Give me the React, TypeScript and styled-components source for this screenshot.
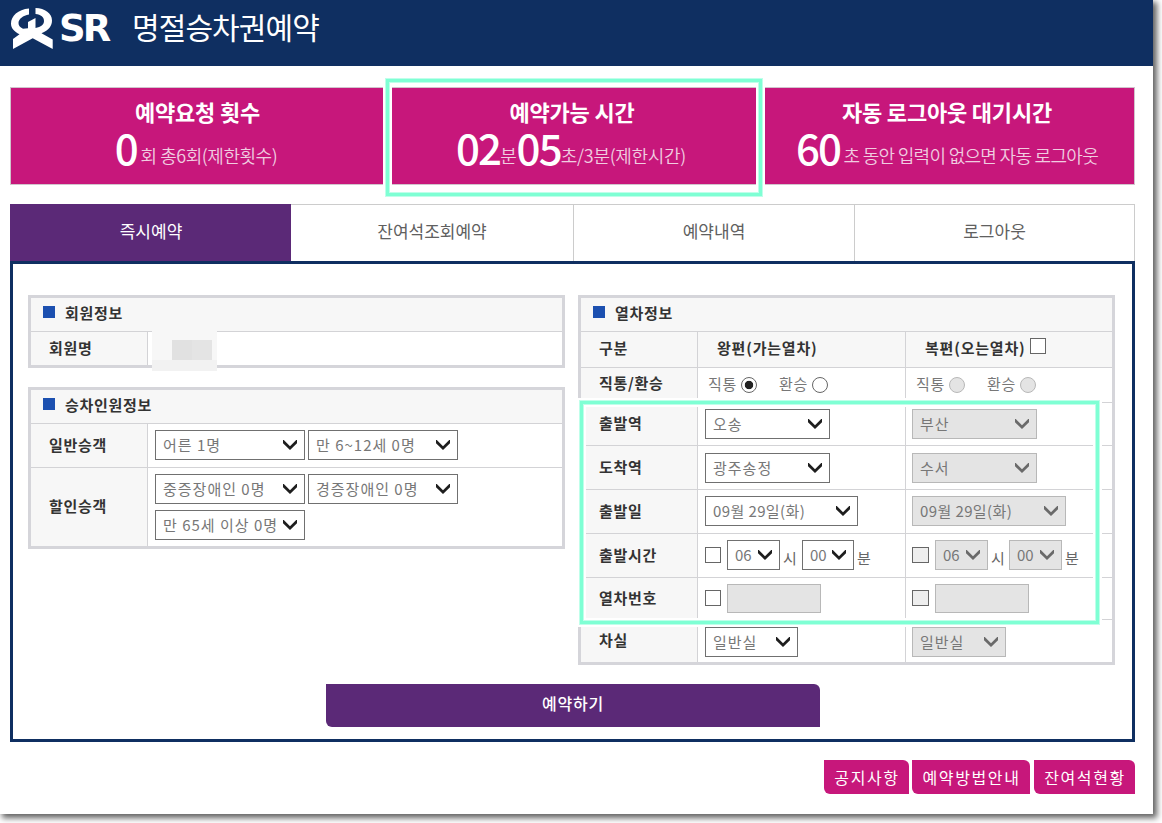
import React from "react";
import styled, { createGlobalStyle, css } from "styled-components";

const NAVY = "#0f2f61";
const PURPLE = "#5b2977";
const PINK = "#c7177b";
const LINE = "#d3d3d6";
const MINT = "#7fffd4";

const GlobalStyle = createGlobalStyle`
  * { box-sizing: border-box; }
  html { background: #fff; overflow: hidden; }
  body {
    margin: 0;
    min-height: 100vh;
    font-family: "Noto Sans CJK KR", "Noto Sans", sans-serif;
    color: #333;
    line-height: 1;
  }
`;

const Page = styled.div`
  position: relative;
  width: 1153px;
  height: 814px;
  background: #fff;
  box-shadow: 3px 3px 6px 1px rgba(0, 0, 0, 0.62);
`;

const Header = styled.header`
  display: flex;
  align-items: center;
  height: 66px;
  padding: 0 0 15px 10px;
  background: ${NAVY};
  color: #fff;
`;

const LogoText = styled.span`
  width: 77px;
  padding: 7px 0 0 4px;
  font: bold 37px/40px "DejaVu Sans", sans-serif;
  letter-spacing: -3px;
`;

const Title = styled.h1`
  margin: 0;
  font-size: 30px;
  font-weight: 400;
  line-height: 40px;
  letter-spacing: -0.9px;
`;

const Main = styled.main`
  padding: 21px 18px 0 10px;
`;

const Stats = styled.section`
  display: grid;
  grid-template-columns: 375px 376px 374px;
  height: 98px;
  border: 1px solid #d0c4cc;
  background: ${PINK};
  color: #fff;
  text-align: center;
`;

const Stat = styled.div<{ $end: number }>`
  padding: 9px ${(p) => p.$end}px 0 0;
`;

const StatTitle = styled.div`
  font-size: 22px;
  font-weight: 700;
  line-height: 28px;
  letter-spacing: -0.2px;
`;

const StatLine = styled.div<{ $end?: number }>`
  display: flex;
  justify-content: center;
  align-items: baseline;
  padding-right: ${(p) => p.$end ?? 0}px;
  line-height: 44px;
`;

const Big = styled.span`
  font-size: 42px;
  font-weight: 500;
  letter-spacing: -1.8px;
`;

const Small = styled.span<{ $ls: number }>`
  font-size: 18px;
  font-weight: 350;
  white-space: pre;
  color: #f0cde0;
  letter-spacing: ${(p) => p.$ls}px;
  transform: translateY(-2px);
`;

const Tabs = styled.nav`
  display: grid;
  grid-template-columns: 281px 283px 281px 280px;
  height: 57px;
  margin-top: 19px;
`;

const Tab = styled.div<{ $active?: boolean }>`
  display: flex;
  align-items: center;
  justify-content: center;
  padding-bottom: 5px;
  font-size: 17px;
  color: #606060;
  border-top: 1px solid #ccc;
  border-right: 1px solid #ccc;
  ${(p) =>
    p.$active &&
    css`
      padding-left: 2px;
      background: ${PURPLE};
      border-color: ${PURPLE};
      color: #fff;
    `}
`;

const Board = styled.section`
  height: 481px;
  border: 3px solid ${NAVY};
  padding: 31px 17px 0 15px;
`;

const Columns = styled.div`
  display: flex;
  justify-content: space-between;
  height: 389px;
`;

const Column = styled.div`
  display: flex;
  flex-direction: column;
  gap: 19px;
  width: 537px;
`;

const Panel = styled.div`
  border: 3px solid #d5d5da;
`;

const PanelHead = styled.div`
  display: flex;
  align-items: center;
  height: 33px;
  padding: 0 0 5px 12px;
  background: #f7f7f7;
  font-size: 15px;
  font-weight: 700;
  letter-spacing: 0.7px;

  &::before {
    content: "";
    width: 12px;
    height: 12px;
    margin-right: 10px;
    background: #1c50b0;
  }
`;

const Row = styled.div<{ $h: number; $split?: boolean; $tint?: boolean }>`
  display: grid;
  grid-template-columns: ${(p) => (p.$split ? "117px 208px 1fr" : "117px 1fr")};
  height: ${(p) => p.$h}px;
  border-top: 1px solid ${LINE};
  background: ${(p) => (p.$tint ? "#f7f7f7" : "#fff")};
`;

const Label = styled.div<{ $pb?: number }>`
  display: flex;
  align-items: center;
  padding: 0 0 ${(p) => p.$pb ?? 3}px 18px;
  background: #f7f7f7;
  border-right: 1px solid ${LINE};
  font-size: 15px;
  font-weight: 700;
  letter-spacing: 0.7px;
`;

const Cell = styled.div<{ $pt?: number; $pl?: number; $line?: boolean }>`
  display: flex;
  flex-wrap: wrap;
  align-content: flex-start;
  padding: ${(p) => p.$pt ?? 6}px 0 0 ${(p) => p.$pl ?? 7}px;
  border-right: ${(p) => (p.$line ? `1px solid ${LINE}` : "0")};
`;

const Pair = styled(Cell)`
  gap: 6px 3px;
`;

const HeadText = styled.span`
  font-size: 15px;
  font-weight: 700;
  line-height: 22px;
  letter-spacing: 0.8px;
`;

const Box = styled.div<{ $w: number; $off?: boolean; $ls: number }>`
  display: flex;
  align-items: center;
  justify-content: space-between;
  width: ${(p) => p.$w}px;
  height: 30px;
  padding: 0 7px 0 7px;
  border: 1px solid ${(p) => (p.$off ? "#b8b8b8" : "#707070")};
  background: ${(p) => (p.$off ? "#e4e4e4" : "#fff")};
  color: #777;
  font-size: 15px;
  letter-spacing: ${(p) => p.$ls}px;
  white-space: nowrap;

  span { flex: 0 0 auto; padding-bottom: 1px; }
  svg { flex: 0 0 14px; margin-left: -4px; }
`;

const Input = styled.div`
  width: 94px;
  height: 29px;
  border: 1px solid #b8b8b8;
  background: #e4e4e4;
`;

const Check = styled.span<{ $off?: boolean; $mt?: number; $ml?: number }>`
  width: ${(p) => (p.$off ? 17 : 16)}px;
  height: 16px;
  margin: ${(p) => p.$mt ?? 7}px 6px 0 ${(p) => p.$ml ?? 0}px;
  border: 1px solid #666;
  background: ${(p) => (p.$off ? "#eee" : "#fff")};
`;

const Unit = styled.span<{ $w: number }>`
  width: ${(p) => p.$w}px;
  padding: 10px 0 0 3px;
  font-size: 15px;
  color: #666;
`;

const RadioText = styled.span`
  width: 33px;
  font-size: 15px;
  line-height: 22px;
  color: #777;
  letter-spacing: 0.8px;
`;

const Radio = styled.span<{ $on?: boolean; $off?: boolean }>`
  width: 16px;
  height: 16px;
  margin: 4px 22px 0 0;
  border: 1px solid ${(p) => (p.$off ? "#b8b8b8" : "#666")};
  border-radius: 50%;
  background: ${(p) =>
    p.$on ? "radial-gradient(circle, #222 0 3.8px, #fff 4.6px)" : p.$off ? "#e4e4e4" : "#fff"};
`;

const Mosaic = styled.div`
  position: absolute;
  left: 152px;
  top: 330px;
  display: grid;
  grid-template: 10px 20px 11px / 20px 20px 20px 5px;
  width: 65px;
  background: #f7f7f7;

  i:nth-child(1) { grid-area: 2 / 2; background: #e1e1e1; }
  i:nth-child(2) { grid-area: 2 / 3; background: #e4e4e4; }
  i:nth-child(3) { grid-area: 3 / 1 / 4 / 5; background: #f2f2f2; }
`;

const Submit = styled.button`
  display: block;
  width: 494px;
  height: 43px;
  margin: 0 0 0 298px;
  padding: 0 0 6px;
  border: 0;
  border-radius: 0 6px 0 6px;
  background: ${PURPLE};
  color: #fff;
  font: 500 16px/1 "Noto Sans CJK KR", sans-serif;
  letter-spacing: 0.8px;
`;

const Links = styled.div`
  display: flex;
  justify-content: flex-end;
  margin-top: 18px;
`;

const LinkButton = styled.button<{ $w: number; $ml?: number }>`
  width: ${(p) => p.$w}px;
  height: 34px;
  margin-left: ${(p) => p.$ml ?? 0}px;
  padding: 0 0 0 1px;
  border: 0;
  border-radius: 0 6px 0 6px;
  background: ${PINK};
  color: #fff;
  font: 400 16px/1 "Noto Sans CJK KR", sans-serif;
  letter-spacing: 1.6px;
`;

const Highlight = styled.div<{ $x: number; $y: number; $w: number; $h: number }>`
  position: absolute;
  left: ${(p) => p.$x}px;
  top: ${(p) => p.$y}px;
  width: ${(p) => p.$w}px;
  height: ${(p) => p.$h}px;
  border: 3px solid ${MINT};
  box-shadow: 0 0 0 1px #bfffea, 0 0 0 3px #fff, inset 0 0 0 1px #bfffea, inset 0 0 0 3px #fff;
`;

const LogoMark = styled.svg`
  flex: none;
  margin-top: 7px;
`;

const Logo = () => (
  <LogoMark width="45" height="44" viewBox="9 7 45 44">
    <path
      fill="#fff"
      d="M28 8.500 C17 9.500 10 16 10 23.500 C10 28 13 31.500 18.500 34.200 L12 39 V49 L31.700 38.300 L51.700 49 V39.500 L40.500 33.200 C48 30 51 26 51 20.500 C51 13 44 8.500 34.500 8 V14 C40 14.600 43 17 43 21 C43 24.500 40 27 34.500 28 V18 L27 22 V28.300 L22 28.800 C18.800 27 17.500 25.500 17.500 23 C17.500 19 22 15.500 28 14.500 Z"
    />
  </LogoMark>
);

const Arrow = ({ off }: { off?: boolean }) => (
  <svg width="14" height="10" viewBox="0 0 14 10">
    <path
      d="M0 0 H0.800 L7 6.200 L13.200 0 H14 V3.300 L7 10 L0 3.300 Z"
      fill={off ? "#6a6a6a" : "#1e1e1e"}
    />
  </svg>
);

type SelectProps = { w: number; off?: boolean; ls?: number; children: React.ReactNode };

const Select = ({ w, off, ls = 1, children }: SelectProps) => (
  <Box $w={w} $off={off} $ls={ls}>
    <span>{children}</span>
    <Arrow off={off} />
  </Box>
);

const Time = ({ off }: { off?: boolean }) => (
  <>
    <Check $off={off} />
    <Select w={53} off={off} ls={0}>06</Select>
    <Unit $w={off ? 21 : 22}>시</Unit>
    <Select w={off ? 53 : 52} off={off} ls={0}>00</Select>
    <Unit $w={20}>분</Unit>
  </>
);

const Radios = ({ off }: { off?: boolean }) => (
  <>
    <RadioText>직통</RadioText>
    <Radio $on={!off} $off={off} />
    <RadioText>환승</RadioText>
    <Radio $off={off} />
  </>
);

export default function App() {
  return (
    <>
      <GlobalStyle />
      <Page>
        <Header>
          <Logo />
          <LogoText>SR</LogoText>
          <Title>명절승차권예약</Title>
        </Header>
        <Main>
          <Stats>
            <Stat $end={2}>
              <StatTitle>예약요청 횟수</StatTitle>
              <StatLine $end={3}>
                <Big>0</Big>
                <Small $ls={-0.45}> 회 총6회(제한횟수)</Small>
              </StatLine>
            </Stat>
            <Stat $end={4}>
              <StatTitle>예약가능 시간</StatTitle>
              <StatLine $end={2}>
                <Big>02</Big>
                <Small $ls={-0.3}>분</Small>
                <Big>05</Big>
                <Small $ls={-0.3}>초/3분(제한시간)</Small>
              </StatLine>
            </Stat>
            <Stat $end={4}>
              <StatTitle>자동 로그아웃 대기시간</StatTitle>
              <StatLine>
                <Big>60</Big>
                <Small $ls={-0.7}> 초 동안 입력이 없으면 자동 로그아웃</Small>
              </StatLine>
            </Stat>
          </Stats>
          <Tabs>
            <Tab $active>즉시예약</Tab>
            <Tab>잔여석조회예약</Tab>
            <Tab>예약내역</Tab>
            <Tab>로그아웃</Tab>
          </Tabs>
          <Board>
            <Columns>
              <Column>
                <Panel>
                  <PanelHead>회원정보</PanelHead>
                  <Row $h={34}>
                    <Label>회원명</Label>
                    <Cell />
                  </Row>
                </Panel>
                <Panel>
                  <PanelHead>승차인원정보</PanelHead>
                  <Row $h={44}>
                    <Label>일반승객</Label>
                    <Pair>
                      <Select w={150}>어른 1명</Select>
                      <Select w={150}>만 6~12세 0명</Select>
                    </Pair>
                  </Row>
                  <Row $h={79}>
                    <Label>할인승객</Label>
                    <Pair>
                      <Select w={150}>중증장애인 0명</Select>
                      <Select w={150}>경증장애인 0명</Select>
                      <Select w={150}>만 65세 이상 0명</Select>
                    </Pair>
                  </Row>
                </Panel>
              </Column>
              <Column>
                <Panel>
                  <PanelHead>열차정보</PanelHead>
                  <Row $h={36} $split $tint>
                    <Label $pb={5}>구분</Label>
                    <Cell $pl={19} $pt={5} $line>
                      <HeadText>왕편(가는열차)</HeadText>
                    </Cell>
                    <Cell $pl={19} $pt={5}>
                      <HeadText>복편(오는열차)</HeadText>
                      <Check $mt={1} $ml={4} />
                    </Cell>
                  </Row>
                  <Row $h={35} $split>
                    <Label $pb={5}>직통/환승</Label>
                    <Cell $pl={10} $pt={5} $line><Radios /></Cell>
                    <Cell $pl={10} $pt={5}><Radios off /></Cell>
                  </Row>
                  <Row $h={43} $split>
                    <Label>출발역</Label>
                    <Cell $line><Select w={125}>오송</Select></Cell>
                    <Cell $pl={6}><Select w={125} off>부산</Select></Cell>
                  </Row>
                  <Row $h={44} $split>
                    <Label>도착역</Label>
                    <Cell $pt={7} $line><Select w={125}>광주송정</Select></Cell>
                    <Cell $pt={7} $pl={6}><Select w={125} off>수서</Select></Cell>
                  </Row>
                  <Row $h={44} $split>
                    <Label>출발일</Label>
                    <Cell $line><Select w={153} ls={0.4}>09월 29일(화)</Select></Cell>
                    <Cell $pl={6}><Select w={154} ls={0.4} off>09월 29일(화)</Select></Cell>
                  </Row>
                  <Row $h={44} $split>
                    <Label>출발시간</Label>
                    <Cell $line><Time /></Cell>
                    <Cell $pl={6}><Time off /></Cell>
                  </Row>
                  <Row $h={42} $split>
                    <Label>열차번호</Label>
                    <Cell $line><Check $mt={6} /><Input /></Cell>
                    <Cell $pl={6}><Check $off $mt={6} /><Input /></Cell>
                  </Row>
                  <Row $h={43} $split>
                    <Label>차실</Label>
                    <Cell $pt={7} $line><Select w={93}>일반실</Select></Cell>
                    <Cell $pt={7} $pl={6}><Select w={94} off>일반실</Select></Cell>
                  </Row>
                </Panel>
              </Column>
            </Columns>
            <Submit>예약하기</Submit>
          </Board>
          <Links>
            <LinkButton $w={85}>공지사항</LinkButton>
            <LinkButton $w={118} $ml={3}>예약방법안내</LinkButton>
            <LinkButton $w={101} $ml={4}>잔여석현황</LinkButton>
          </Links>
        </Main>
        <Mosaic><i /><i /><i /></Mosaic>
        <Highlight $x={386} $y={79} $w={376} $h={117} />
        <Highlight $x={580} $y={401} $w={519} $h={223} />
      </Page>
    </>
  );
}
